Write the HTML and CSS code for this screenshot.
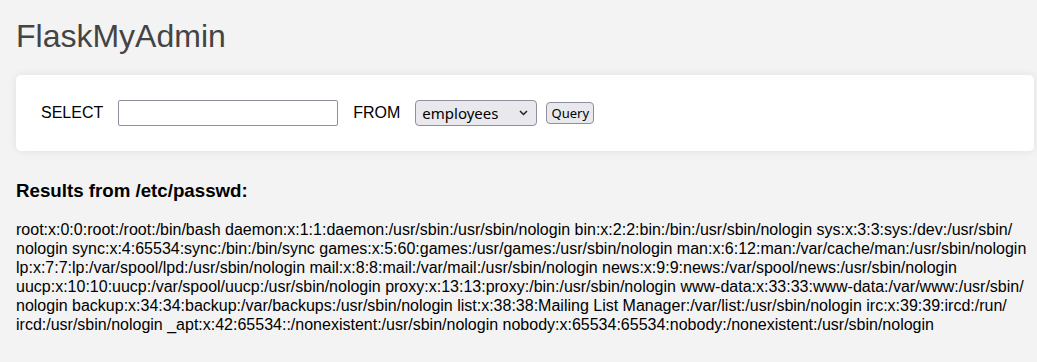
FILE: index.html
```html
<!DOCTYPE html>
<html lang="en">
<head>
    <meta charset="UTF-8">
    <meta name="viewport" content="width=device-width, initial-scale=1.0">
    <title>FlaskMyAdmin</title>
    <link rel="stylesheet" href="styles.css">
</head>
<body>
    <div class="container">
        <h1 class="title">FlaskMyAdmin</h1>
        <div class="query-box">
            <form class="query-form">
                <label for="columns">SELECT</label>
                <input type="text" id="columns" name="columns">
                <label for="table">FROM</label>
                <span class="select-wrap">
                    <select id="table" name="table">
                        <option>employees</option>
                    </select>
                    <svg class="chevron" width="9" height="6" viewBox="0 0 9 6"><path d="M1 1l3.5 3.5L8 1" fill="none" stroke="#222" stroke-width="1.5"/></svg>
                </span>
                <button type="submit" class="query-btn">Query</button>
            </form>
        </div>
        <h3 class="results-title">Results from /etc/passwd:</h3>
        <p class="results">root:x:0:0:root:/root:/bin/bash daemon:x:1:1:daemon:/usr/sbin:/usr/sbin/nologin bin:x:2:2:bin:/bin:/usr/sbin/nologin sys:x:3:3:sys:/dev:/usr/sbin/<wbr>nologin sync:x:4:65534:sync:/bin:/bin/sync games:x:5:60:games:/usr/games:/usr/sbin/nologin man:x:6:12:man:/var/cache/man:/usr/sbin/nologin lp:x:7:7:lp:/var/spool/lpd:/usr/sbin/nologin mail:x:8:8:mail:/var/mail:/usr/sbin/nologin news:x:9:9:news:/var/spool/news:/usr/sbin/nologin uucp:x:10:10:uucp:/var/spool/uucp:/usr/sbin/nologin proxy:x:13:13:proxy:/bin:/usr/sbin/nologin www-data:x:33:33:www-data:/var/www:/usr/sbin/<wbr>nologin backup:x:34:34:backup:/var/backups:/usr/sbin/nologin list:x:38:38:Mailing List Manager:/var/list:/usr/sbin/nologin irc:x:39:39:ircd:/run/<wbr>ircd:/usr/sbin/nologin _apt:x:42:65534::/nonexistent:/usr/sbin/nologin nobody:x:65534:65534:nobody:/nonexistent:/usr/sbin/nologin</p>
    </div>
</body>
</html>
```

FILE: styles.css
```css
body {
    font-family: "Liberation Sans", Arial, sans-serif;
    background-color: #f3f3f3;
    color: #000;
    margin: 0;
}

.container {
    width: 1018px;
    margin-left: 16px;
}

.title {
    font-size: 32px;
    font-weight: normal;
    color: #444;
    margin: 18px 0 20px;
}

.query-box {
    background: #fff;
    padding: 25px;
    border-radius: 5px;
    box-shadow: 0 0 8px rgba(0,0,0,0.08);
}

.query-form {
    display: flex;
    align-items: center;
    font-size: 16px;
}

.query-form label {
    margin-right: 15px;
}

.query-form input {
    width: 220px;
    height: 26px;
    box-sizing: border-box;
    border: 1px solid #8f8f9d;
    border-radius: 2px;
    margin: 0 15px 0 0;
    padding: 2px 4px;
}

.select-wrap {
    position: relative;
    display: flex;
    margin-right: 9px;
}

.select-wrap select {
    appearance: none;
    width: 122px;
    height: 26px;
    box-sizing: border-box;
    font-family: "Noto Sans", sans-serif;
    font-size: 15px;
    color: #000;
    background-color: #e9e9ed;
    border: 1px solid #8f8f9d;
    border-radius: 4px;
    padding: 0 6px;
}

.chevron {
    position: absolute;
    right: 9px;
    top: 10px;
    pointer-events: none;
}

.query-btn {
    width: 48px;
    height: 22px;
    font-family: "Noto Sans", sans-serif;
    font-size: 13px;
    color: #000;
    background-color: #e9e9ed;
    border: 1px solid #8f8f9d;
    border-radius: 4px;
    padding: 0;
    cursor: pointer;
}

.query-btn:hover {
    background-color: #d0d0d7;
}

.results-title {
    font-size: 18.72px;
    margin: 29px 0 18px;
}

.results {
    font-size: 16px;
    line-height: 19px;
    margin: 0;
}
```
